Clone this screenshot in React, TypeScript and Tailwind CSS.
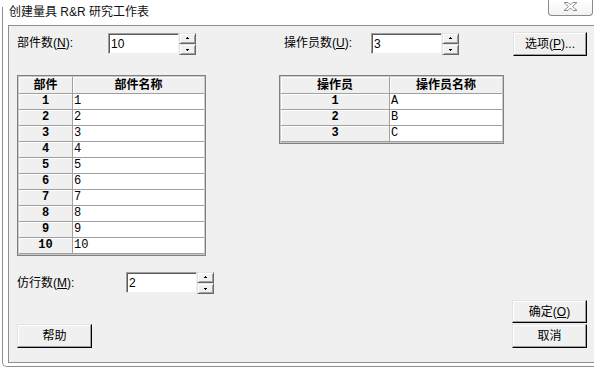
const PARTS = ['1', '2', '3', '4', '5', '6', '7', '8', '9', '10'];
const OPERATORS = ['A', 'B', 'C'];

/** 스핀 버튼의 작은 화살표 */
function SpinArrow({ up }: { up?: boolean }) {
  return (
    <svg width="5" height="3" viewBox="0 0 5 3" shapeRendering="crispEdges">
      {up ? (
        <>
          <rect x="2" y="0" width="1" height="1" fill="#000" />
          <rect x="1" y="1" width="3" height="1" fill="#000" />
        </>
      ) : (
        <>
          <rect x="1" y="1" width="3" height="1" fill="#000" />
          <rect x="2" y="2" width="1" height="1" fill="#000" />
        </>
      )}
    </svg>
  );
}

function SpinButton({ up }: { up?: boolean }) {
  return (
    <div className="h-[11px] w-[17px] flex items-center justify-center bg-[#f0f0f0] border border-t-[#e3e3e3] border-l-[#e3e3e3] border-r-[#696969] border-b-[#696969] shadow-[inset_1px_1px_0_#ffffff,inset_-1px_-1px_0_#a0a0a0]">
      <SpinArrow up={up} />
    </div>
  );
}

function NumberField({ value }: { value: string }) {
  return (
    <div className="flex items-start">
      <div className="w-[71px] h-[21px] bg-white border border-t-[#a0a0a0] border-l-[#a0a0a0] border-r-[#f0f0f0] border-b-[#f0f0f0] shadow-[inset_1px_1px_0_#5a5a5a] pl-[2px] flex items-center text-[12px] leading-[16px] text-black">
        {value}
      </div>
      <div className="flex flex-col">
        <SpinButton up />
        <SpinButton />
      </div>
    </div>
  );
}

function Button({ children, className }: { children: React.ReactNode; className: string }) {
  return (
    <div
      className={
        'flex items-center justify-center bg-[#f0f0f0] border border-t-[#e3e3e3] border-l-[#e3e3e3] border-r-[#000000] border-b-[#000000] shadow-[inset_-1px_-1px_0_#a0a0a0,inset_1px_1px_0_#ffffff] text-[12px] leading-[16px] text-black ' +
        className
      }
    >
      {children}
    </div>
  );
}

/** 부품 / 작업자 표 */
function DataGrid({
  head1,
  head2,
  rows,
  width,
  col1,
}: {
  head1: string;
  head2: string;
  rows: string[];
  width: string;
  col1: string;
}) {
  return (
    <div className={'border border-[#808080] bg-white ' + width}>
      <div className="border border-[#c8c8c8]">
        <div className="flex h-[17px] border-b border-[#a0a0a0] bg-[#f0f0f0] font-bold text-[12px] leading-[16px]">
          <div className={'border-r border-[#a0a0a0] flex items-center justify-center shadow-[inset_1px_1px_0_#ffffff] ' + col1}>
            {head1}
          </div>
          <div className="flex-1 flex items-center justify-center shadow-[inset_1px_1px_0_#ffffff]">{head2}</div>
        </div>
        {rows.map((name, i) => (
          <div key={i} className="flex h-[16px] border-b border-[#a0a0a0] text-[12px] leading-[15px] font-['Liberation_Mono','Noto_Sans_CJK_SC',monospace]">
            <div className={'border-r border-[#a0a0a0] bg-[#f0f0f0] flex items-center justify-center font-bold shadow-[inset_1px_1px_0_#ffffff] ' + col1}>
              {i + 1}
            </div>
            <div className="flex-1 flex items-center pl-[1px]">{name}</div>
          </div>
        ))}
      </div>
    </div>
  );
}

export default function App() {
  return (
    <div className="w-[594px] h-[370px] bg-white overflow-hidden font-['Liberation_Sans','Noto_Sans_CJK_SC',sans-serif] text-black">
      <div className="ml-[2px] mt-[7px] h-[360px] border-l border-b border-[#8f8f8f] rounded-bl-[5px] pl-[5px] flex flex-col">
        {/* 타이틀 바 */}
        <div className="-mt-[7px] h-[25px] flex items-start justify-between">
          <div className="pl-[1px] pt-[4px] text-[12px] leading-[16px] text-[#111]">创建量具 R&amp;R 研究工作表</div>
          <div className="mr-[1px] w-[45px] h-[16px] border border-t-0 border-[#8a8a8a] rounded-b-[4px] bg-gradient-to-b from-[#ffffff] to-[#f2f2f2] flex items-start justify-center pt-[2px]">
            <svg width="17" height="9" viewBox="0 0 17 9">
              <path
                d="M2 0.5 H6 L8.5 3 L11 0.5 H15 L10.5 4.5 L15 8.5 H11 L8.5 6 L6 8.5 H2 L6.5 4.5 Z"
                fill="#ffffff"
                stroke="#8c8c8c"
                strokeWidth="1"
              />
            </svg>
          </div>
        </div>

        {/* 본문 */}
        <div className="h-[338px] bg-[#f0f0f0] border-t border-l border-b border-[#8f8f8f] pl-[8px] pr-[7px] pt-[6px] flex flex-col">
          <div className="flex items-start h-[24px]">
            <div className="w-[91px] h-[22px] flex items-center text-[12px] leading-[16px]">
              部件数(<u>N</u>):
            </div>
            <div className="mt-[1px]">
              <NumberField value="10" />
            </div>
            <div className="ml-[88px] w-[87px] h-[22px] flex items-center text-[12px] leading-[16px]">
              操作员数(<u>U</u>):
            </div>
            <div className="mt-[1px]">
              <NumberField value="3" />
            </div>
            <Button className="ml-auto w-[74px] h-[24px]">
              选项(<u>P</u>)...
            </Button>
          </div>

          <div className="mt-[19px] flex items-start">
            <DataGrid head1="部件" head2="部件名称" rows={PARTS} width="w-[189px]" col1="w-[54px]" />
            <div className="ml-[73px]">
              <DataGrid head1="操作员" head2="操作员名称" rows={OPERATORS} width="w-[225px]" col1="w-[109px]" />
            </div>
          </div>

          <div className="mt-[16px] flex items-end justify-between">
            <div className="flex flex-col">
              <div className="flex items-center">
                <div className="w-[109px] text-[12px] leading-[16px]">
                  仿行数(<u>M</u>):
                </div>
                <NumberField value="2" />
              </div>
              <Button className="mt-[30px] w-[75px] h-[24px]">帮助</Button>
            </div>
            <div className="flex flex-col">
              <Button className="w-[75px] h-[23px]">
                确定(<u>O</u>)
              </Button>
              <Button className="mt-[1px] w-[75px] h-[24px]">取消</Button>
            </div>
          </div>
        </div>
      </div>
    </div>
  );
}
